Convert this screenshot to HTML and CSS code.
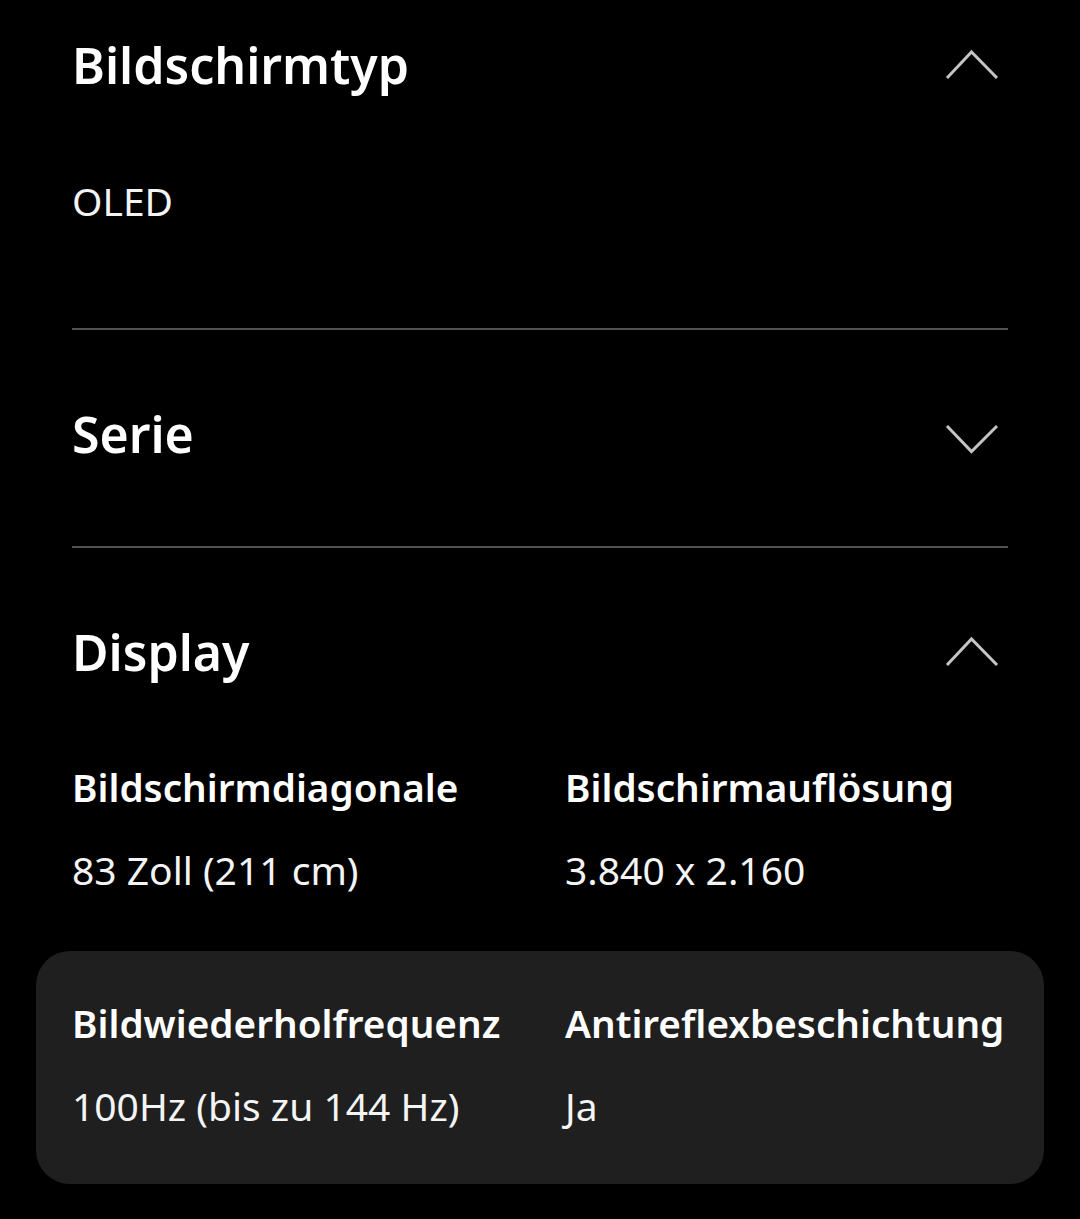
FILE: index.html
```html
<!DOCTYPE html>
<html lang="de">
<head>
  <meta charset="UTF-8">
  <title>Technische Daten</title>
  <meta name="viewport" content="width=device-width, initial-scale=1">
  <link rel="stylesheet" href="styles.css">
</head>
<body>
  <div class="specs">
    <!-- Bildschirmtyp -->
    <section class="acc open first">
      <div class="acc-head">
        <h2>Bildschirmtyp</h2>
        <svg class="chev" viewBox="0 0 64 40" width="64" height="40"><path d="M3 31 L27.5 5 L53 31"/></svg>
      </div>
      <div class="acc-body single">
        <p class="value">OLED</p>
      </div>
    </section>

    <!-- Serie -->
    <section class="acc">
      <div class="acc-head">
        <h2>Serie</h2>
        <svg class="chev" viewBox="0 0 64 40" width="64" height="40"><path d="M3 10 L27.5 35.5 L53 10"/></svg>
      </div>
    </section>

    <!-- Display -->
    <section class="acc open last">
      <div class="acc-head">
        <h2>Display</h2>
        <svg class="chev" viewBox="0 0 64 40" width="64" height="40"><path d="M3 31 L27.5 5 L53 31"/></svg>
      </div>
      <div class="spec-row">
        <div class="spec">
          <h3>Bildschirmdiagonale</h3>
          <p class="value">83 Zoll (211 cm)</p>
        </div>
        <div class="spec">
          <h3>Bildschirmauflösung</h3>
          <p class="value">3.840 x 2.160</p>
        </div>
      </div>
      <div class="spec-row highlight">
        <div class="spec">
          <h3>Bildwiederholfrequenz</h3>
          <p class="value">100Hz (bis zu 144 Hz)</p>
        </div>
        <div class="spec">
          <h3>Antireflexbeschichtung</h3>
          <p class="value">Ja</p>
        </div>
      </div>
    </section>
  </div>
</body>
</html>
```

FILE: styles.css
```css
body { margin: 0; background: #000; color: #fff; font-family: "Noto Sans", "Open Sans", Arial, sans-serif; overflow: hidden; }
.specs { padding: 0 72px; }

.acc { border-bottom: 2px solid #505050; }
.acc.last { border-bottom: none; }
.acc.first { margin-top: -39px; }

.acc-head { display: flex; justify-content: space-between; align-items: center; padding: 80px 0 84px; height: 52px; }
.acc.open .acc-head { padding-bottom: 37px; }
.acc-head h2 { margin: -5px 0 0; font-size: 50px; font-weight: 600; line-height: 52px; }

.chev { fill: none; stroke: #c4c4c4; stroke-width: 3; }

.value { margin: 0; font-size: 39px; line-height: 50px; font-weight: 400; color: #f4f4f4; }
.acc-body.single { padding: 46px 0 102px; }

.spec-row { display: grid; grid-template-columns: 1fr 1fr; column-gap: 50px; padding: 44px 0 56px; }
.spec h3 { margin: 0 0 32px; font-size: 38.7px; line-height: 52px; font-weight: 600; white-space: nowrap; }
.spec-row.highlight { background: #1f1f1f; border-radius: 34px; margin: 0 -36px; padding: 46px 36px 53px; }
```
